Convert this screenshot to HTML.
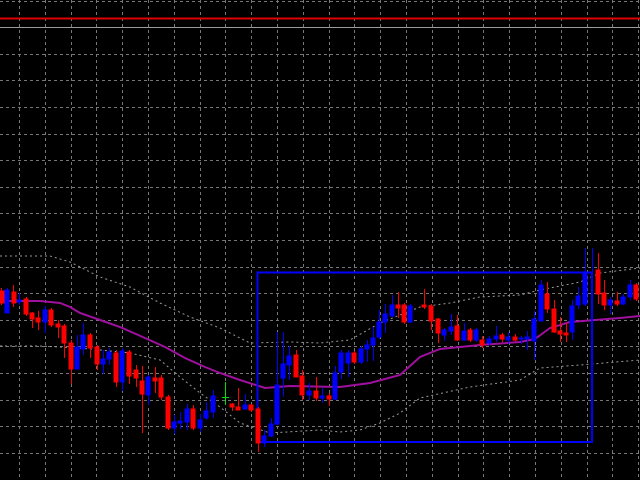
<!DOCTYPE html>
<html><head><meta charset="utf-8"><style>
html,body{margin:0;padding:0;background:#000;width:640px;height:480px;overflow:hidden}
</style></head><body>
<svg width="640" height="480" xmlns="http://www.w3.org/2000/svg" style="display:block">
<rect width="640" height="480" fill="#000"/>
<g stroke="#777" stroke-width="1" stroke-dasharray="3,3">
<path d="M19.5 0V480M45.5 0V480M71.5 0V480M96.5 0V480M122.5 0V480M148.5 0V480M174.5 0V480M200.5 0V480M225.5 0V480M251.5 0V480M277.5 0V480M303.5 0V480M329.5 0V480M354.5 0V480M380.5 0V480M406.5 0V480M432.5 0V480M458.5 0V480M483.5 0V480M509.5 0V480M535.5 0V480M561.5 0V480M587.5 0V480M612.5 0V480M638.5 0V480"/>
<path d="M0 1.5H640M0 54.5H640M0 80.5H640M0 107.5H640M0 134.5H640M0 160.5H640M0 187.5H640M0 213.5H640M0 240.5H640M0 267.5H640M0 293.5H640M0 320.5H640M0 346.5H640M0 373.5H640M0 400.5H640M0 426.5H640M0 453.5H640"/>
</g>
<path d="M0 18.5H640" stroke="#e00000" stroke-width="2"/>
<path d="M0 27.5H640" stroke="#9a9a9a" stroke-width="1"/>
<g fill="none" stroke="#9a9a9a" stroke-width="1" stroke-dasharray="2,3">
<polyline points="0,256 50,256 70,262 100,277 130,287 160,303 190,317 220,328 250,343 290,342 320,343 350,340 380,323 400,315 420,307 450,303 480,297 520,295 540,290 580,282 600,273 640,268"/>
<polyline points="0,346 40,346 80,348 130,353 160,360 180,377 200,393 220,407 240,423 270,433 320,430 340,432 360,430 380,423 400,413 420,398 470,387 520,380 540,368 580,365 640,360"/>
</g>
<polyline fill="none" stroke="#a0109f" stroke-width="2" points="0,301 40,301 60,303 70,307 80,313 100,320 120,327 145,338 165,347 185,358 205,367 220,373 240,380 265,388 290,386 340,387 370,383 400,375 420,357 440,349 480,345 520,342 535,339 550,328 570,322 620,318 640,316"/>
<rect x="257.5" y="272.5" width="334.5" height="169.5" fill="none" stroke="#0000ff" stroke-width="2"/>
<g stroke-width="1">
<g fill="#ff0000" stroke="#ff0000">
<path d="M1.5 288V305M13.5 285V307M26.5 297V316M32.5 312V328M38.5 311V330M51.5 308V327M58.5 320V338M64.5 324V358M71.5 340V384M90.5 333V358M97.5 345V370M116.5 350V387M129.5 350V384M136.5 365V387M142.5 366V433M155.5 367V393M161.5 375V400M168.5 395V430M193.5 405V430M232.5 403V411M238.5 388V410M251.5 404V412M258.5 407V452M296.5 350V377M302.5 370V400M316.5 377V401M329.5 393V406M354.5 351V364M398.5 292V318M404.5 303V324M424.5 289V309M431.5 304V330M438.5 318V343M457.5 315V341M470.5 328V342M482.5 336V348M502.5 333V342M515.5 334V341M547.5 282V313M554.5 300V333M560.5 317V342M566.5 323V342M598.5 253V304M604.5 280V310M617.5 292V306M636.5 283V301"/>
<rect x="0" y="291" width="4" height="12"/><rect x="12" y="292" width="4" height="11"/><rect x="24" y="299" width="4" height="15"/><rect x="30" y="313" width="4" height="6"/><rect x="36" y="318" width="4" height="4"/><rect x="49" y="310" width="4" height="15"/><rect x="56" y="324" width="4" height="3"/><rect x="62" y="326" width="4" height="17"/><rect x="69" y="343" width="4" height="26"/><rect x="88" y="335" width="4" height="13"/><rect x="95" y="347" width="4" height="17"/><rect x="114" y="353" width="4" height="29"/><rect x="127" y="352" width="4" height="24"/><rect x="134" y="370" width="4" height="8"/><rect x="140" y="381" width="4" height="13"/><rect x="153" y="378" width="4" height="3"/><rect x="159" y="378" width="4" height="19"/><rect x="166" y="397" width="4" height="31"/><rect x="191" y="409" width="4" height="19"/><rect x="230" y="404" width="4" height="3"/><rect x="236" y="407" width="4" height="3"/><rect x="249" y="405" width="4" height="5"/><rect x="256" y="409" width="4" height="34"/><rect x="294" y="355" width="4" height="22"/><rect x="300" y="376" width="4" height="19"/><rect x="314" y="391" width="4" height="7"/><rect x="327" y="396" width="4" height="3"/><rect x="352" y="353" width="4" height="9"/><rect x="396" y="305" width="4" height="3"/><rect x="402" y="305" width="4" height="17"/><rect x="422" y="305" width="4" height="2"/><rect x="429" y="306" width="4" height="15"/><rect x="436" y="319" width="4" height="14"/><rect x="455" y="326" width="4" height="14"/><rect x="468" y="330" width="4" height="10"/><rect x="480" y="340" width="4" height="5"/><rect x="500" y="335" width="4" height="4"/><rect x="513" y="337" width="4" height="3"/><rect x="545" y="294" width="4" height="15"/><rect x="552" y="309" width="4" height="23"/><rect x="558" y="331" width="4" height="3"/><rect x="564" y="333" width="4" height="2"/><rect x="596" y="270" width="4" height="24"/><rect x="602" y="293" width="4" height="12"/><rect x="615" y="301" width="4" height="3"/><rect x="634" y="285" width="4" height="14"/>
</g>
<g fill="#0000ff" stroke="#0000ff">
<path d="M7.5 288V313M19.5 293V305M45.5 306V333M77.5 335V368M83.5 323V355M103.5 350V374M109.5 348V365M122.5 348V391M148.5 375V405M174.5 415V434M180.5 412V429M187.5 404V430M200.5 414V432M206.5 402V420M213.5 390V418M245.5 394V410M264.5 430V447M271.5 418V437M277.5 332V425M283.5 332V397M289.5 346V380M309.5 383V400M322.5 388V403M335.5 366V400M341.5 350V379M348.5 350V377M361.5 346V364M367.5 340V362M373.5 327V361M379.5 310V339M385.5 304V333M392.5 295V317M410.5 304V323M444.5 328V341M451.5 314V335M464.5 323V341M476.5 328V342M489.5 336V345M496.5 326V342M508.5 332V344M521.5 336V344M527.5 331V350M534.5 311V360M541.5 280V321M572.5 300V340M578.5 287V309M585.5 248V306M592.5 248V272M610.5 297V314M623.5 294V305M630.5 280V300"/>
<rect x="5" y="290" width="4" height="23"/><rect x="17" y="300" width="4" height="2"/><rect x="43" y="310" width="4" height="12"/><rect x="75" y="347" width="4" height="22"/><rect x="81" y="335" width="4" height="14"/><rect x="101" y="359" width="4" height="5"/><rect x="107" y="352" width="4" height="7"/><rect x="120" y="351" width="4" height="31"/><rect x="146" y="377" width="4" height="18"/><rect x="172" y="422" width="4" height="6"/><rect x="178" y="421" width="4" height="2"/><rect x="185" y="409" width="4" height="13"/><rect x="198" y="420" width="4" height="8"/><rect x="204" y="411" width="4" height="7"/><rect x="211" y="396" width="4" height="16"/><rect x="243" y="405" width="4" height="4"/><rect x="262" y="436" width="4" height="7"/><rect x="269" y="424" width="4" height="12"/><rect x="275" y="385" width="4" height="39"/><rect x="281" y="364" width="4" height="14"/><rect x="287" y="356" width="4" height="9"/><rect x="307" y="391" width="4" height="4"/><rect x="320" y="396" width="4" height="2"/><rect x="333" y="373" width="4" height="26"/><rect x="339" y="353" width="4" height="19"/><rect x="346" y="353" width="4" height="10"/><rect x="359" y="349" width="4" height="13"/><rect x="365" y="345" width="4" height="4"/><rect x="371" y="338" width="4" height="7"/><rect x="377" y="322" width="4" height="15"/><rect x="383" y="314" width="4" height="8"/><rect x="390" y="305" width="4" height="11"/><rect x="408" y="306" width="4" height="16"/><rect x="442" y="330" width="4" height="5"/><rect x="449" y="327" width="4" height="4"/><rect x="462" y="331" width="4" height="9"/><rect x="474" y="330" width="4" height="10"/><rect x="487" y="339" width="4" height="4"/><rect x="494" y="336" width="4" height="3"/><rect x="506" y="337" width="4" height="3"/><rect x="519" y="338" width="4" height="1"/><rect x="525" y="337" width="4" height="2"/><rect x="532" y="319" width="4" height="22"/><rect x="539" y="285" width="4" height="36"/><rect x="570" y="306" width="4" height="26"/><rect x="576" y="296" width="4" height="9"/><rect x="583" y="272" width="4" height="32"/><rect x="608" y="300" width="4" height="5"/><rect x="621" y="297" width="4" height="7"/><rect x="628" y="285" width="4" height="12"/>
</g>
<path d="M225.5 382V405M222 397.5H229" stroke="#00e000"/>
</g>
</svg>
</body></html>
